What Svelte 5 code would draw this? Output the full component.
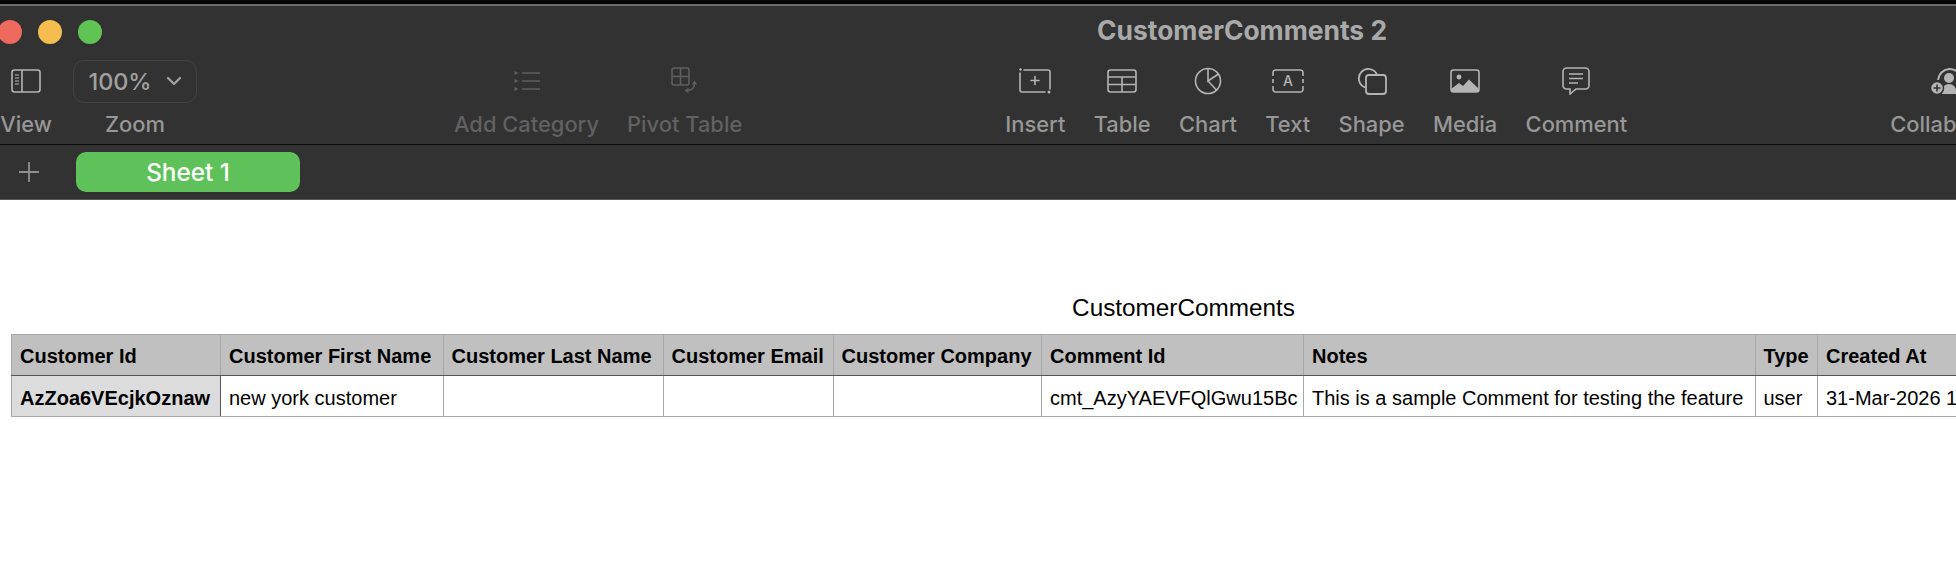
<script>
  const columns = [
    { name: "Customer Id", width: 209 },
    { name: "Customer First Name", width: 222.5 },
    { name: "Customer Last Name", width: 220 },
    { name: "Customer Email", width: 170 },
    { name: "Customer Company", width: 208.5 },
    { name: "Comment Id", width: 262 },
    { name: "Notes", width: 451.5 },
    { name: "Type", width: 62.5 },
    { name: "Created At", width: 538 }
  ];

  const row = [
    "AzZoa6VEcjkOznaw",
    "new york customer",
    "",
    "",
    "",
    "cmt_AzyYAEVFQlGwu15Bc",
    "This is a sample Comment for testing the feature",
    "user",
    "31-Mar-2026 10:42 AM"
  ];
</script>

<div class="page">
  <header class="chrome">
    <div class="titlebar">
      <div class="lights">
        <span class="light red"></span>
        <span class="light yellow"></span>
        <span class="light green"></span>
      </div>
      <div class="doc-title">CustomerComments 2</div>
    </div>

    <div class="tools">
      <div class="group first">
        <div class="tool view">
          <div class="icon">
            <svg width="30" height="24" viewBox="0 0 30 24" fill="none" stroke="currentColor" stroke-width="1.6">
              <rect x="1" y="1" width="28" height="22" rx="2.5" />
              <path d="M11 1v22" />
              <path d="M4 6h4M4 9h4M4 12h4M4 15h4" stroke-width="1.2" />
            </svg>
          </div>
          <span class="label">View</span>
        </div>
        <div class="tool zoom">
          <div class="icon">
            <div class="zoom-pill">
              <span>100%</span>
              <svg width="16" height="10" viewBox="0 0 16 10" fill="none" stroke="currentColor" stroke-width="2.4" stroke-linecap="round" stroke-linejoin="round">
                <path d="M2 2l6 6 6-6" />
              </svg>
            </div>
          </div>
          <span class="label">Zoom</span>
        </div>
      </div>

      <div class="group disabled">
        <div class="tool">
          <div class="icon">
            <svg width="26" height="20" viewBox="0 0 26 20" fill="none" stroke="currentColor" stroke-width="1.6">
              <path d="M8 2h18M8 10h18M8 18h18" />
              <path d="M0.500 0l4 2-4 2zM0.500 8l4 2-4 2zM0.500 16l4 2-4 2z" fill="currentColor" stroke="none" />
            </svg>
          </div>
          <span class="label">Add Category</span>
        </div>
        <div class="tool">
          <div class="icon">
            <svg width="28" height="28" viewBox="0 0 28 28" fill="none" stroke="currentColor" stroke-width="1.6">
              <rect x="1" y="1" width="17" height="17" rx="2" />
              <path d="M9.500 1v17M1 9.500h17" />
              <path d="M23.500 17c0 4-3 6.500-7 6.500" />
              <path d="M20.800 17.500l2.700-4 2.700 4zM17.500 20.800l-4 2.700 4 2.700z" fill="currentColor" stroke="none" />
            </svg>
          </div>
          <span class="label">Pivot Table</span>
        </div>
      </div>

      <div class="group main-tools">
        <div class="tool">
          <div class="icon">
            <svg width="32" height="26" viewBox="0 0 32 26" fill="none" stroke="currentColor" stroke-width="1.6" stroke-linecap="round">
              <path d="M5 2h24a2 2 0 0 1 2 2v17M1 5v17a2 2 0 0 0 2 2h23" />
              <circle cx="1.500" cy="1.500" r="1.300" fill="currentColor" stroke="none" />
              <circle cx="30" cy="24" r="1.500" fill="currentColor" stroke="none" />
              <path d="M16 8.500v8M12 12.500h8" />
            </svg>
          </div>
          <span class="label">Insert</span>
        </div>
        <div class="tool">
          <div class="icon">
            <svg width="30" height="24" viewBox="0 0 30 24" fill="none" stroke="currentColor" stroke-width="1.6">
              <rect x="1" y="1" width="28" height="22" rx="2.5" />
              <path d="M1 8h28M1 15.500h28M15 8v15" />
            </svg>
          </div>
          <span class="label">Table</span>
        </div>
        <div class="tool">
          <div class="icon">
            <svg width="28" height="28" viewBox="0 0 28 28" fill="none" stroke="currentColor" stroke-width="1.6">
              <circle cx="14" cy="14" r="12.500" />
              <path d="M14 1.500V14l10.500-7M14 14l8.500 9" />
            </svg>
          </div>
          <span class="label">Chart</span>
        </div>
        <div class="tool">
          <div class="icon">
            <svg width="32" height="24" viewBox="0 0 32 24" fill="none" stroke="currentColor" stroke-width="1.6">
              <path d="M1 7V3.500A2.500 2.500 0 0 1 3.500 1h25A2.500 2.500 0 0 1 31 3.500V7M1 17v3.500A2.500 2.500 0 0 0 3.500 23h25a2.500 2.500 0 0 0 2.500-2.500V17M1 10v4M31 10v4" />
              <text x="16" y="17" class="icon-letter">A</text>
            </svg>
          </div>
          <span class="label">Text</span>
        </div>
        <div class="tool">
          <div class="icon">
            <svg width="30" height="28" viewBox="0 0 30 28" fill="none" stroke="currentColor" stroke-width="1.8">
              <path d="M8.500 20.500a9.500 9.500 0 1 1 11.500-13" />
              <rect x="9" y="8" width="20" height="19" rx="3" />
            </svg>
          </div>
          <span class="label">Shape</span>
        </div>
        <div class="tool">
          <div class="icon">
            <svg width="30" height="24" viewBox="0 0 30 24" fill="none" stroke="currentColor" stroke-width="1.6">
              <rect x="1" y="1" width="28" height="22" rx="2.5" />
              <circle cx="9" cy="8" r="2.400" fill="currentColor" stroke="none" />
              <path d="M1 20l8-6 4 3 6-6.500 10 9.500v1a2 2 0 0 1-2 2H3a2 2 0 0 1-2-2z" fill="currentColor" stroke="none" />
            </svg>
          </div>
          <span class="label">Media</span>
        </div>
        <div class="tool">
          <div class="icon">
            <svg width="28" height="28" viewBox="0 0 28 28" fill="none" stroke="currentColor" stroke-width="1.6">
              <path d="M4.500 1h19A3.500 3.500 0 0 1 27 4.500v14a3.500 3.500 0 0 1-3.500 3.500H14l-6 5v-5H4.500A3.500 3.500 0 0 1 1 18.500v-14A3.500 3.500 0 0 1 4.500 1z" />
              <path d="M7 7h14M7 11.500h14M7 16h9" stroke-width="1.400" />
            </svg>
          </div>
          <span class="label">Comment</span>
        </div>
      </div>

      <div class="group">
        <div class="tool">
          <div class="icon">
            <svg width="40" height="28" viewBox="0 0 40 28" fill="currentColor">
              <path d="M8 13a12 12 0 0 1 11-11 12 12 0 0 1 11 6" fill="none" stroke="currentColor" stroke-width="2" />
              <circle cx="19" cy="11" r="5" />
              <path d="M12 27v-3c0-4 3-7 7-7s7 3 7 7v3z" />
              <circle cx="7" cy="21" r="6.500" stroke="#323232" stroke-width="1.500" />
              <path d="M7 17.500v7M3.500 21h7" stroke="#323232" stroke-width="1.600" />
            </svg>
          </div>
          <span class="label">Collaborate</span>
        </div>
      </div>
    </div>

    <div class="tabs">
      <svg class="add-sheet" width="20" height="20" viewBox="0 0 20 20" stroke="currentColor" stroke-width="1.8">
        <path d="M10 0v20M0 10h20" />
      </svg>
      <button class="sheet-tab">Sheet 1</button>
    </div>
  </header>

  <main class="sheet">
    <table>
      <caption>CustomerComments</caption>
      <colgroup>
        {#each columns as col}
          <col style="width: {col.width}px" />
        {/each}
      </colgroup>
      <thead>
        <tr>
          {#each columns as col}
            <th>{col.name}</th>
          {/each}
        </tr>
      </thead>
      <tbody>
        <tr>
          {#each row as value}
            <td>{value}</td>
          {/each}
        </tr>
      </tbody>
    </table>
  </main>
</div>

<style>
  :global(body) {
    margin: 0;
    overflow: hidden;
    background: #fff;
  }

  .page {
    width: 1956px;
    height: 564px;
    overflow: hidden;
    background: #fff;
  }

  .chrome {
    width: 2482px;
    background: #323232;
    border-top: 4px solid #050505;
    font-family: Inter, "Noto Sans", sans-serif;
  }

  .titlebar {
    display: flex;
    align-items: center;
    height: 50px;
    border-top: 2px solid #6c6c6c;
    box-sizing: content-box;
  }

  .lights {
    display: flex;
    gap: 16px;
    margin-left: -2px;
    margin-top: 2px;
  }

  .light {
    width: 24px;
    height: 24px;
    border-radius: 50%;
  }

  .red {
    background: #ee6a5f;
  }

  .yellow {
    background: #f5bd4f;
  }

  .green {
    background: #5fc454;
  }

  .doc-title {
    margin-left: 995px;
    margin-top: -2px;
    font-size: 26.4px;
    font-weight: 700;
    color: #a9a9a9;
    white-space: nowrap;
  }

  .tools {
    display: flex;
    align-items: flex-start;
    height: 81px;
    padding-top: 7px;
    border-bottom: 1px solid #0c0c0c;
  }

  .group {
    display: flex;
    gap: 29px;
    margin-left: 263px;
  }

  .group.first {
    gap: 21px;
    margin-left: 0;
  }

  .group.disabled {
    margin-left: 257px;
    gap: 28px;
  }

  .group.main-tools {
    gap: 28.3px;
  }

  .tool {
    display: flex;
    flex-direction: column;
    align-items: center;
    color: #b4b4b4;
  }

  .view {
    width: 52px;
  }

  .zoom {
    width: 124px;
  }

  .icon {
    display: flex;
    align-items: center;
    justify-content: center;
    height: 36px;
    margin-bottom: 12px;
  }

  .label {
    font-size: 21.9px;
    line-height: 26px;
    font-weight: 500;
    color: #979797;
    white-space: nowrap;
  }

  .disabled .tool {
    color: #5f5f5f;
  }

  .disabled .label {
    color: #616161;
  }

  .zoom-pill {
    display: flex;
    align-items: center;
    justify-content: center;
    gap: 14px;
    box-sizing: border-box;
    width: 124px;
    height: 43px;
    border: 1.5px solid #434343;
    border-radius: 11px;
    font-size: 23.4px;
    font-weight: 500;
    color: #a0a0a0;
  }

  .icon-letter {
    font-family: Inter, sans-serif;
    font-size: 14px;
    font-weight: 500;
    fill: currentColor;
    stroke: none;
    text-anchor: middle;
  }

  .tabs {
    display: flex;
    align-items: center;
    height: 54px;
    border-bottom: 1px solid #5a5a5a;
  }

  .add-sheet {
    margin-left: 19px;
    color: #8f8f8f;
  }

  .sheet-tab {
    width: 224px;
    height: 40px;
    margin-left: 37px;
    padding: 0;
    border: none;
    border-radius: 10px;
    background: #5ec15a;
    color: #fff;
    font-family: inherit;
    font-size: 24.3px;
    font-weight: 500;
  }

  .sheet {
    padding: 93px 0 0 11px;
    font-family: "Liberation Sans", Arial, sans-serif;
    color: #000;
  }

  table {
    table-layout: fixed;
    width: 2344px;
    border-collapse: collapse;
  }

  caption {
    height: 30px;
    padding-bottom: 11px;
    font-size: 24.3px;
    line-height: 30px;
  }

  th,
  td {
    height: 41px;
    padding: 3px 8px 0;
    box-sizing: border-box;
    border: 1px solid #a8a8a8;
    overflow: hidden;
    white-space: nowrap;
    text-align: left;
    font-size: 20px;
  }

  td {
    padding-top: 5px;
  }

  th {
    background: #bfc0bf;
    border-bottom: 1.5px solid #555;
    font-weight: 700;
  }

  td:first-child {
    background: #dcdcdc;
    border-right: 1.5px solid #555;
    font-weight: 700;
  }
</style>
